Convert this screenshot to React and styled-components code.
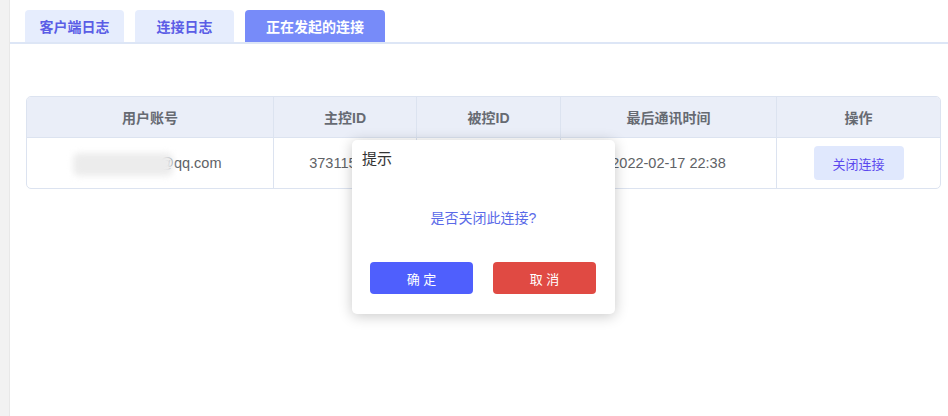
import React from 'react';
import { styled, createGlobalStyle } from 'styled-components';

const GlobalStyle = createGlobalStyle`
  html, body {
    margin: 0;
    padding: 0;
    background: #ffffff;
    font-family: "Liberation Sans", "Noto Sans CJK SC", sans-serif;
  }
`;

const tabs = [
  { label: '客户端日志', width: 99 },
  { label: '连接日志', width: 99 },
  { label: '正在发起的连接', width: 140, active: true },
];

const columns = [
  { title: '用户账号', width: 247 },
  { title: '主控ID', width: 143 },
  { title: '被控ID', width: 144 },
  { title: '最后通讯时间', width: 216 },
  { title: '操作' },
];

function App() {
  return (
    <>
      <GlobalStyle />
      <Page>
        <SideStrip />
        <Main>
          <TabBar>
            {tabs.map((t) => (
              <Tab key={t.label} $active={t.active} $width={t.width}>
                {t.label}
              </Tab>
            ))}
          </TabBar>

          <TableWrap>
            <Table>
              <colgroup>
                {columns.map((c) => (
                  <col key={c.title} style={c.width ? { width: c.width } : undefined} />
                ))}
              </colgroup>
              <thead>
                <tr>
                  {columns.map((c) => (
                    <Th key={c.title}>{c.title}</Th>
                  ))}
                </tr>
              </thead>
              <tbody>
                <tr>
                  <Td>
                    <Masked>1234567890</Masked>@qq.com
                  </Td>
                  <Td>373115862</Td>
                  <Td>825301477</Td>
                  <Td>2022-02-17 22:38</Td>
                  <Td>
                    <CloseBtn>关闭连接</CloseBtn>
                  </Td>
                </tr>
              </tbody>
            </Table>
          </TableWrap>
        </Main>

        <Dialog>
          <DialogTitle>提示</DialogTitle>
          <DialogMessage>是否关闭此连接?</DialogMessage>
          <DialogActions>
            <DialogButton $kind="confirm">确 定</DialogButton>
            <DialogButton $kind="cancel">取 消</DialogButton>
          </DialogActions>
        </Dialog>
      </Page>
    </>
  );
}

export default App;

const Page = styled.div`
  position: relative;
  display: flex;
  width: 948px;
  height: 416px;
  overflow: hidden;
`;

const SideStrip = styled.div`
  width: 9px;
  flex-shrink: 0;
  background: #f2f2f2;
  border-right: 1px solid #e8e8e8;
`;

const Main = styled.div`
  flex: 1;
  min-width: 0;
  display: flex;
  flex-direction: column;
`;

const TabBar = styled.div`
  display: flex;
  gap: 11px;
  padding: 10px 0 0 15px;
  border-bottom: 2px solid #dde6f6;
`;

const Tab = styled.div`
  width: ${(p) => p.$width}px;
  height: 32px;
  display: flex;
  align-items: center;
  justify-content: center;
  border-radius: 4px 4px 0 0;
  font-size: 14px;
  font-weight: bold;
  background: ${(p) => (p.$active ? '#778bf9' : '#e6edfd')};
  color: ${(p) => (p.$active ? '#ffffff' : '#5b5de6')};
`;

const TableWrap = styled.div`
  padding: 52px 7px 0 16px;
`;

const Table = styled.table`
  width: 100%;
  box-sizing: border-box;
  border-collapse: separate;
  border-spacing: 0;
  border: 1px solid #dce3f0;
  border-radius: 5px;
  overflow: hidden;
  table-layout: fixed;
`;

const Th = styled.th`
  height: 40px;
  padding: 0;
  background: #eaeef8;
  color: #666a72;
  font-size: 14px;
  font-weight: bold;
  text-align: center;
  border-bottom: 1px solid #dce3f0;
  border-right: 1px solid #dce3f0;
  &:last-child {
    border-right: none;
  }
`;

const Td = styled.td`
  height: 50px;
  padding: 0;
  text-align: center;
  color: #606266;
  font-size: 14.5px;
  border-right: 1px solid #dce3f0;
  white-space: nowrap;
  &:last-child {
    border-right: none;
  }
`;

const Masked = styled.span`
  position: relative;
  display: inline-block;
  color: transparent;
  &::before {
    content: '';
    position: absolute;
    left: -6px;
    right: -14px;
    top: -2px;
    bottom: -5px;
    background: #ececec;
    filter: blur(3px);
    border-radius: 6px;
  }
`;

const CloseBtn = styled.span`
  display: inline-flex;
  align-items: center;
  justify-content: center;
  width: 90px;
  height: 34px;
  background: #e0e8fd;
  border-radius: 4px;
  color: #5b48ee;
  font-size: 13px;
`;

const Dialog = styled.div`
  position: absolute;
  left: 352px;
  top: 140px;
  width: 263px;
  height: 174px;
  background: #ffffff;
  border-radius: 5px;
  box-shadow: 0 2px 14px rgba(0, 0, 0, 0.22);
  display: flex;
  flex-direction: column;
  box-sizing: border-box;
  padding: 9px 0 0;
`;

const DialogTitle = styled.div`
  padding-left: 10px;
  font-size: 15px;
  color: #333333;
  line-height: 20px;
`;

const DialogMessage = styled.div`
  margin-top: 38px;
  text-align: center;
  font-size: 14px;
  color: #5a6ae8;
  line-height: 22px;
`;

const DialogActions = styled.div`
  display: flex;
  gap: 20px;
  padding: 0 19px 0 18px;
  margin-top: 33px;
`;

const DialogButton = styled.button`
  width: 103px;
  height: 32px;
  border: none;
  border-radius: 4px;
  font-family: inherit;
  font-size: 13px;
  color: #ffffff;
  background: ${(p) => (p.$kind === 'confirm' ? '#4f5ffd' : '#e04a43')};
`;
